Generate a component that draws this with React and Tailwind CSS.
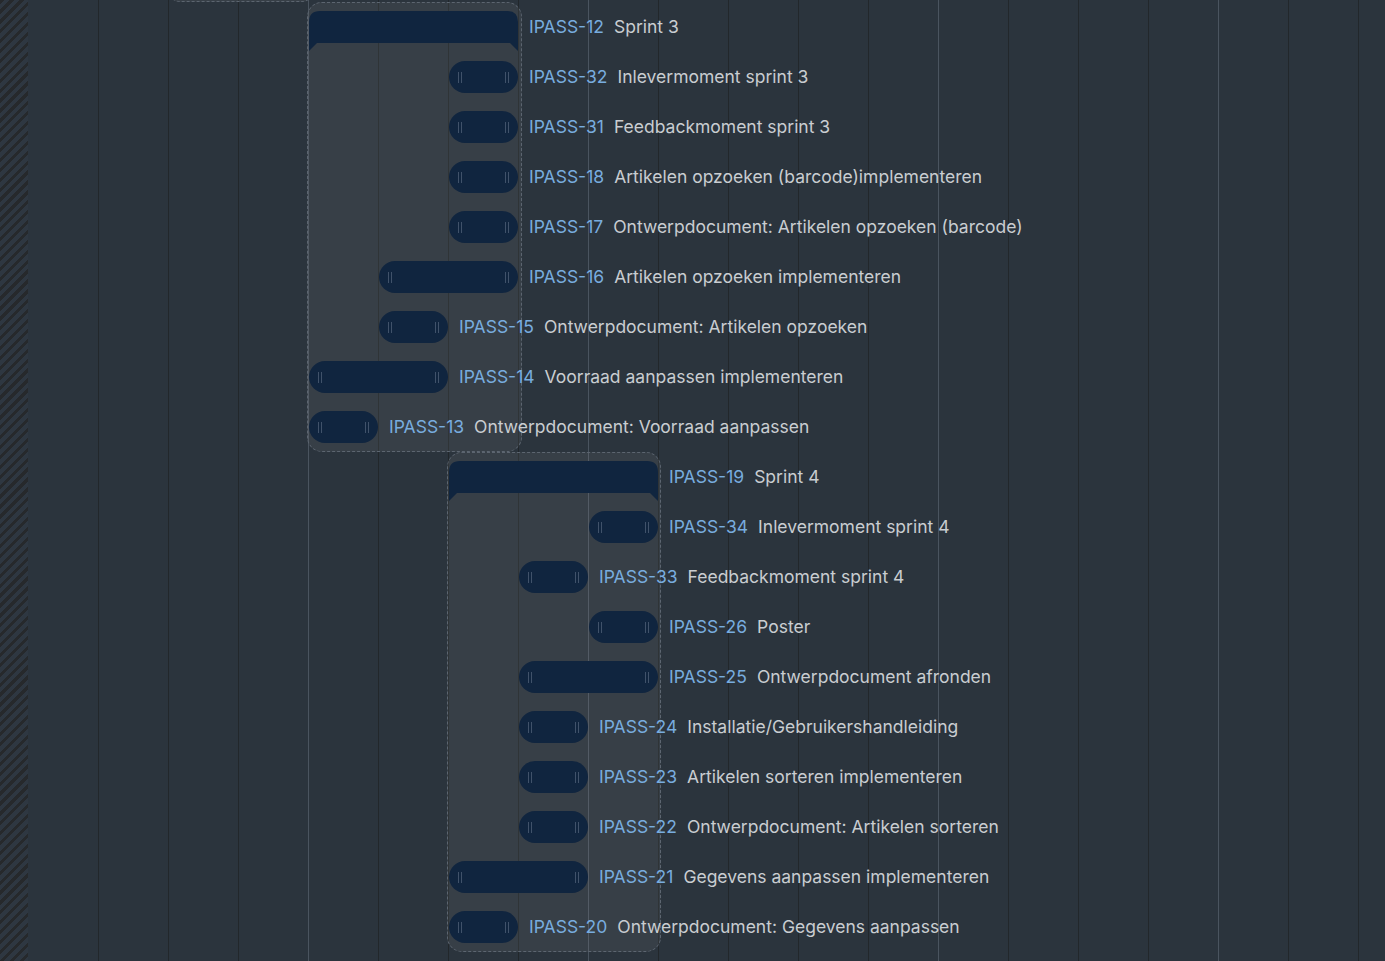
import React from "react";

const COL = 70;

// lighter grid lines sit at these column indexes
const lightCols = [4, 8, 13, 17];

const groups = [
  {
    key: "sprint3",
    left: 307,
    width: 215,
    rows: [
      { id: "IPASS-12", name: "Sprint 3", start: 0, span: 3, summary: true },
      { id: "IPASS-32", name: "Inlevermoment sprint 3", start: 2, span: 1 },
      { id: "IPASS-31", name: "Feedbackmoment sprint 3", start: 2, span: 1 },
      { id: "IPASS-18", name: "Artikelen opzoeken (barcode)implementeren", start: 2, span: 1 },
      { id: "IPASS-17", name: "Ontwerpdocument: Artikelen opzoeken (barcode)", start: 2, span: 1 },
      { id: "IPASS-16", name: "Artikelen opzoeken implementeren", start: 1, span: 2 },
      { id: "IPASS-15", name: "Ontwerpdocument: Artikelen opzoeken", start: 1, span: 1 },
      { id: "IPASS-14", name: "Voorraad aanpassen implementeren", start: 0, span: 2 },
      { id: "IPASS-13", name: "Ontwerpdocument: Voorraad aanpassen", start: 0, span: 1 },
    ],
  },
  {
    key: "sprint4",
    left: 447,
    width: 214,
    rows: [
      { id: "IPASS-19", name: "Sprint 4", start: 0, span: 3, summary: true },
      { id: "IPASS-34", name: "Inlevermoment sprint 4", start: 2, span: 1 },
      { id: "IPASS-33", name: "Feedbackmoment sprint 4", start: 1, span: 1 },
      { id: "IPASS-26", name: "Poster", start: 2, span: 1 },
      { id: "IPASS-25", name: "Ontwerpdocument afronden", start: 1, span: 2 },
      { id: "IPASS-24", name: "Installatie/Gebruikershandleiding", start: 1, span: 1 },
      { id: "IPASS-23", name: "Artikelen sorteren implementeren", start: 1, span: 1 },
      { id: "IPASS-22", name: "Ontwerpdocument: Artikelen sorteren", start: 1, span: 1 },
      { id: "IPASS-21", name: "Gegevens aanpassen implementeren", start: 0, span: 2 },
      { id: "IPASS-20", name: "Ontwerpdocument: Gegevens aanpassen", start: 0, span: 1 },
    ],
  },
];

const Handle = () => (
  <div className="flex gap-[2px]">
    <span className="w-px h-[11px] bg-[#40526a]" />
    <span className="w-px h-[11px] bg-[#40526a]" />
  </div>
);

const SummaryBar = ({ width }) => (
  <svg width={width} height="40" viewBox={`0 0 ${width} 40`} className="shrink-0 self-start mt-[9px]">
    <path
      d={`M0,11 Q0,0 11,0 H${width - 11} Q${width},0 ${width},11 V40 L${width - 8},32 H8 L0,40 Z`}
      fill="#10253f"
    />
  </svg>
);

const TaskRow = ({ row }) => {
  const width = COL * row.span - 1;
  return (
    <div className="flex items-center h-[50px] whitespace-nowrap" style={{ paddingLeft: COL * row.start + 1 }}>
      {row.summary ? (
        <SummaryBar width={width} />
      ) : (
        <div
          className="shrink-0 h-[32px] rounded-full bg-[#10253f] flex items-center justify-between px-[9px]"
          style={{ width }}
        >
          <Handle />
          <Handle />
        </div>
      )}
      <span className="ml-[11px] pt-px text-[#78acdf]">{row.id}</span>
      <span className="ml-[10px] pt-px text-[#c9cdd1]">{row.name}</span>
    </div>
  );
};

export default function App() {
  return (
    <div className="w-full h-[961px] overflow-hidden bg-[#2b343d] grid font-['Inter',sans-serif] text-[17.5px]">
      {/* timeline columns */}
      <div className="col-start-1 row-start-1 flex h-full">
        <div className="w-[28px] shrink-0 h-full bg-[repeating-linear-gradient(135deg,#26292c_0px,#26292c_3px,#2e3741_3px,#2e3741_7px)]" />
        {Array.from({ length: 20 }).map((_, i) => (
          <div
            key={i}
            className={`w-[70px] shrink-0 h-full ${
              i === 0 ? "" : lightCols.includes(i) ? "border-l border-[#4a545f]" : "border-l border-[#22272b]"
            }`}
          />
        ))}
      </div>

      {/* tasks */}
      <div className="col-start-1 row-start-1 flex flex-col">
        <div className="ml-[168px] w-[146px] h-[14px] -mt-[12px] shrink-0 rounded-b-[12px] border border-dashed border-[#5c6570] bg-[rgba(150,148,148,0.12)]" />
        {groups.map((g) => (
          <div
            key={g.key}
            className="shrink-0 rounded-[15px] border border-dashed border-[#5c6570] bg-[rgba(150,148,148,0.12)]"
            style={{ marginLeft: g.left, width: g.width, height: g.rows.length * 50 }}
          >
            <div className="-mt-px">
              {g.rows.map((r) => (
                <TaskRow key={r.id} row={r} />
              ))}
            </div>
          </div>
        ))}
      </div>
    </div>
  );
}
